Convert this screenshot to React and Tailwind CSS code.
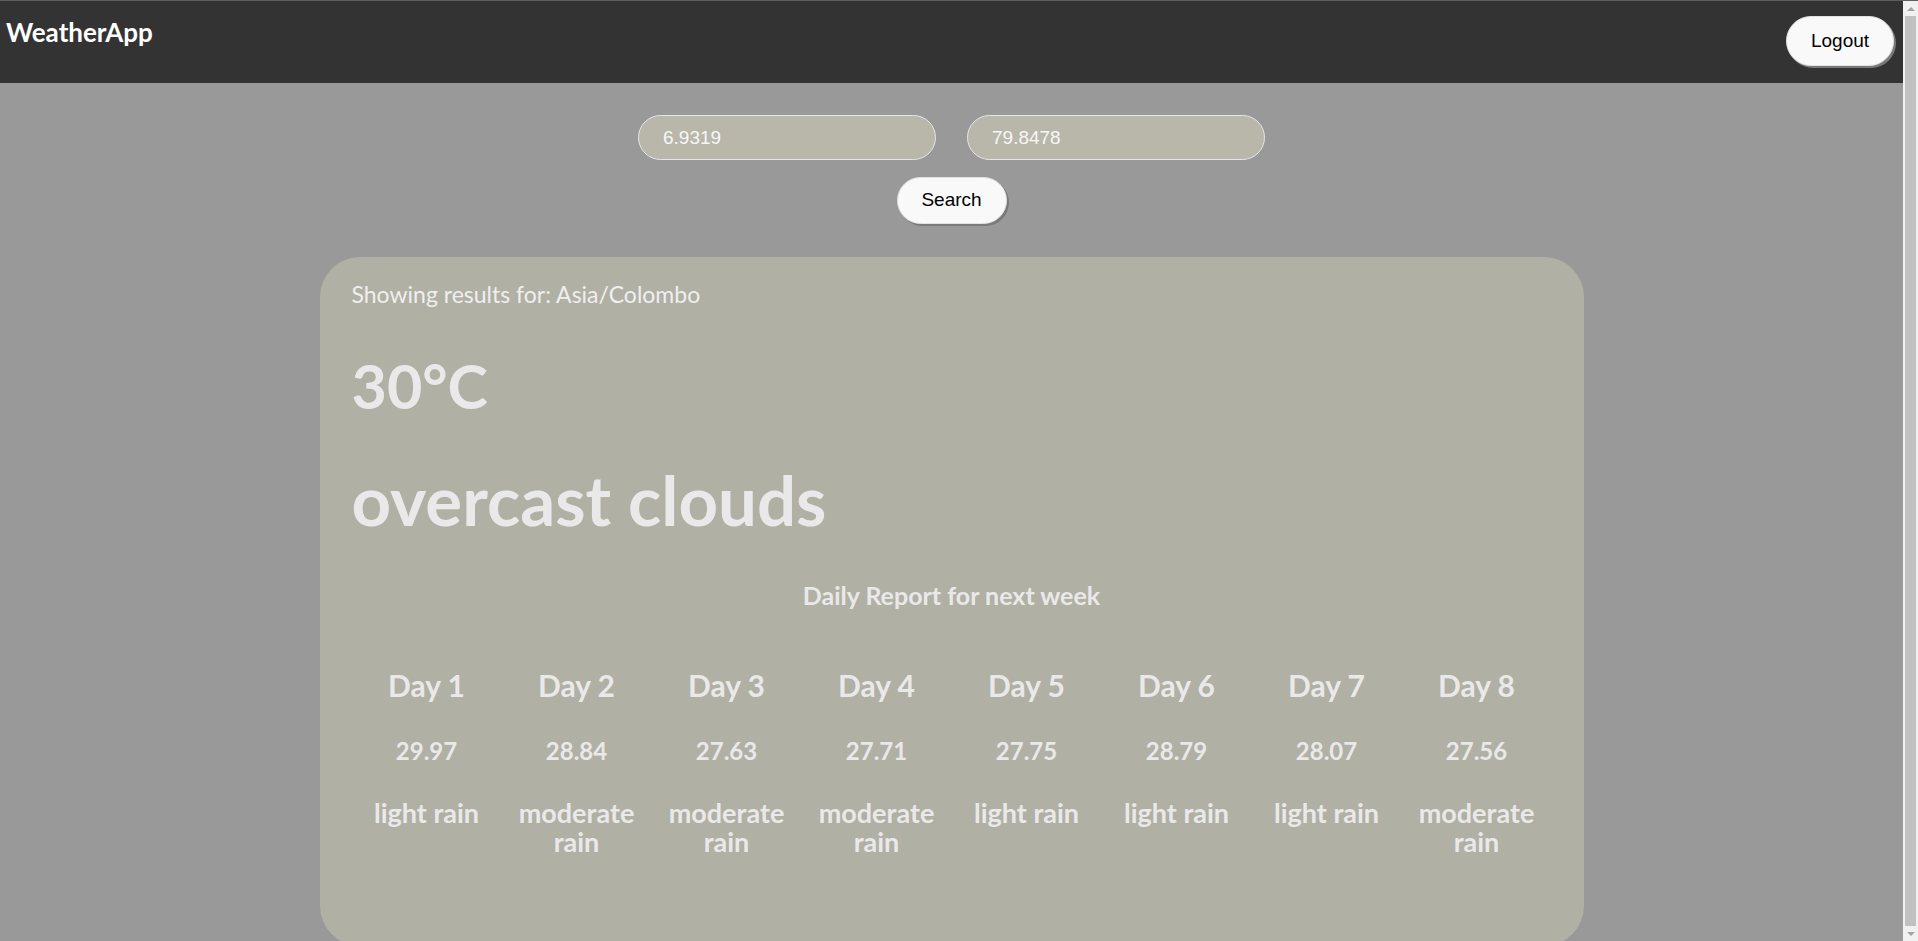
import { useState } from "react";

const forecast = [
  { day: "Day 1", temp: "29.97", desc: "light rain" },
  { day: "Day 2", temp: "28.84", desc: "moderate rain" },
  { day: "Day 3", temp: "27.63", desc: "moderate rain" },
  { day: "Day 4", temp: "27.71", desc: "moderate rain" },
  { day: "Day 5", temp: "27.75", desc: "light rain" },
  { day: "Day 6", temp: "28.79", desc: "light rain" },
  { day: "Day 7", temp: "28.07", desc: "light rain" },
  { day: "Day 8", temp: "27.56", desc: "moderate rain" },
];

function PillButton({ children, className = "" }) {
  return (
    <button
      className={
        "rounded-full border border-[#e2e2e2] bg-[#f9f9f9] font-['Liberation_Sans',Arial,sans-serif] text-[19px] text-black shadow-[2px_2px_0_#7a7a7a] " +
        className
      }
    >
      {children}
    </button>
  );
}

function Scrollbar() {
  return (
    <div className="flex w-[15px] flex-col items-center bg-[#f1f1f1]">
      <div className="flex h-[15px] items-center justify-center">
        <div className="h-0 w-0 border-x-[4px] border-b-[4px] border-x-transparent border-b-[#a3a3a3]" />
      </div>
      <div className="w-[11px] flex-1 bg-[#c1c1c1]" />
      <div className="flex h-[15px] items-center justify-center">
        <div className="h-0 w-0 border-x-[4px] border-t-[4px] border-x-transparent border-t-[#a3a3a3]" />
      </div>
    </div>
  );
}

export default function App() {
  const [lat, setLat] = useState("6.9319");
  const [lon, setLon] = useState("79.8478");

  return (
    <div className="flex h-[941px] overflow-hidden border-t border-[#5e5e5e] bg-[#999999] font-['Lato',sans-serif]">
      <div className="flex min-w-0 flex-1 flex-col">
        <nav className="flex h-[82px] shrink-0 items-start justify-between bg-[#333333] pl-[6px] pr-[9px]">
          <span className="mt-[18px] text-[26px] font-bold leading-[26px] text-white">
            WeatherApp
          </span>
          <PillButton className="mt-[15px] h-[50px] w-[108px]">Logout</PillButton>
        </nav>

        <main className="flex flex-col items-center pt-[32px]">
          <div className="flex gap-[31px]">
            <input
              value={lat}
              onChange={(e) => setLat(e.target.value)}
              className="h-[45px] w-[298px] rounded-full border border-[#e6e6e6] bg-[#b9b6aa] px-[24px] font-['Liberation_Sans',Arial,sans-serif] text-[19px] text-[#f7f7f7] outline-none"
            />
            <input
              value={lon}
              onChange={(e) => setLon(e.target.value)}
              className="h-[45px] w-[298px] rounded-full border border-[#e6e6e6] bg-[#b9b6aa] px-[24px] font-['Liberation_Sans',Arial,sans-serif] text-[19px] text-[#f7f7f7] outline-none"
            />
          </div>
          <PillButton className="mt-[17px] h-[47px] w-[110px]">Search</PillButton>

          <section className="mt-[33px] w-[1264px] shrink-0 rounded-[40px] bg-[#b1b0a4] px-8 pb-[90px] pt-6 text-[#e9e9e9]">
            <p className="text-[23px] leading-[26px] text-[#efefef]">
              Showing results for: Asia/Colombo
            </p>
            <h1 className="mt-[40px] text-[61px] font-bold leading-[77px]">30°C</h1>
            <h2 className="mt-[33px] text-[69px] font-bold leading-[86px]">
              overcast clouds
            </h2>
            <h3 className="mt-[39px] text-center text-[25px] font-bold leading-[26px]">
              Daily Report for next week
            </h3>

            <div className="mt-[60px] grid grid-cols-8">
              {forecast.map((f) => (
                <div key={f.day} className="flex flex-col items-center px-[12px] text-center">
                  <div className="text-[30px] font-bold leading-[34px]">{f.day}</div>
                  <div className="mt-[34px] text-[24px] font-bold leading-[29px]">{f.temp}</div>
                  <div className="mt-[33px] text-[27px] font-bold leading-[29px]">{f.desc}</div>
                </div>
              ))}
            </div>
          </section>
        </main>
      </div>
      <Scrollbar />
    </div>
  );
}
